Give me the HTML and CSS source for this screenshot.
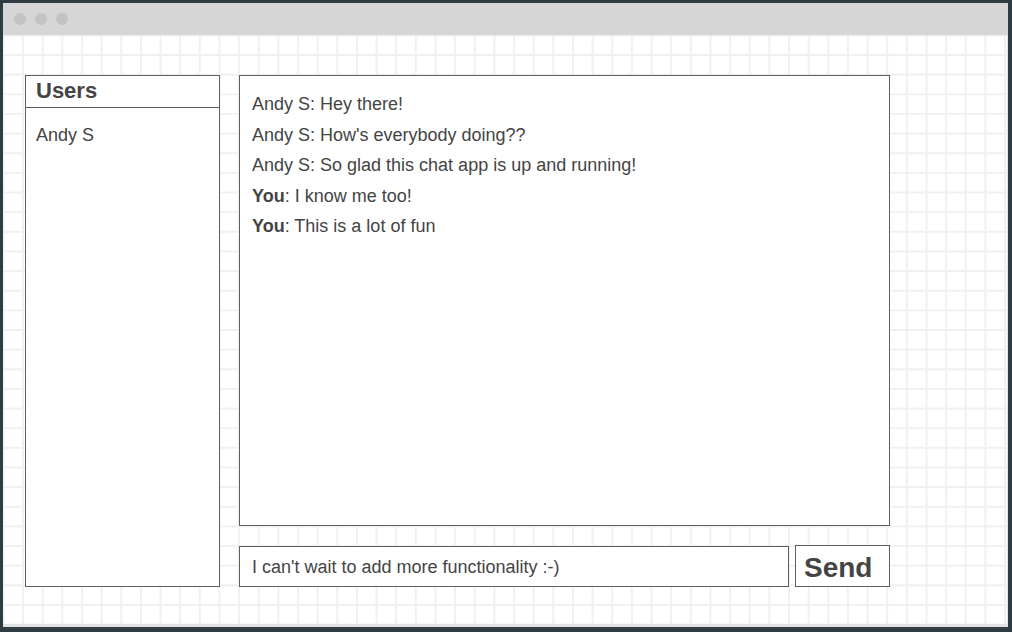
FILE: index.html
```html
<!DOCTYPE html>
<html>
<head>
<meta charset="utf-8">
<link rel="stylesheet" href="styles.css">
</head>
<body>
<div class="frame">
  <div class="titlebar">
    <span class="dot"></span><span class="dot"></span><span class="dot"></span>
  </div>
  <div class="canvas">
    <div class="app">
      <div class="users">
        <div class="users-head">Users</div>
        <div class="users-list">
          <div class="user">Andy S</div>
        </div>
      </div>
      <div class="chat">
        <div class="msg">Andy S: Hey there!</div>
        <div class="msg">Andy S: How's everybody doing??</div>
        <div class="msg">Andy S: So glad this chat app is up and running!</div>
        <div class="msg"><b>You</b>: I know me too!</div>
        <div class="msg"><b>You</b>: This is a lot of fun</div>
      </div>
      <div class="compose">
        <div class="input">I can't wait to add more functionality :-)</div>
        <div class="send">Send</div>
      </div>
    </div>
  </div>
</div>
</body>
</html>
```
FILE: styles.css
```css
html, body {
  margin: 0;
  padding: 0;
}
body {
  width: 1012px;
  height: 632px;
  overflow: hidden;
  background: #2f3c43;
  font-family: "Liberation Sans", Arial, sans-serif;
  color: #444;
}
.frame {
  box-sizing: border-box;
  width: 1012px;
  height: 632px;
  padding: 3px 4px 5px 3px;
  display: flex;
  flex-direction: column;
}
.titlebar {
  height: 32px;
  background: #d6d6d6;
  display: flex;
  align-items: center;
  gap: 9px;
  padding-left: 11px;
  flex: none;
}
.dot {
  width: 12px;
  height: 12px;
  border-radius: 50%;
  background: #c3c3c3;
}
.canvas {
  flex: 1;
  background-color: #fff;
  background-image:
    linear-gradient(to right, #f0f0f0 1.5px, transparent 1.5px),
    linear-gradient(to bottom, #f0f0f0 1.5px, transparent 1.5px);
  background-size: 19.65px 19.65px;
  background-position: -0.6px -0.6px;
  border-bottom: 3px solid #e2e2e2;
  border-right: 1px solid #e2e2e2;
}
.app {
  display: grid;
  grid-template-columns: 195px 651px;
  grid-template-rows: 451px 41px;
  column-gap: 19px;
  row-gap: 20px;
  padding: 40px 0 0 22px;
}
.users {
  grid-row: 1 / 3;
  border: 1px solid #5e5e5e;
  background: #fff;
  display: flex;
  flex-direction: column;
}
.users-head {
  height: 31px;
  border-bottom: 1px solid #5e5e5e;
  font-weight: bold;
  font-size: 22px;
  line-height: 30px;
  padding-left: 10px;
}
.users-list {
  padding: 12px 10px;
}
.user {
  font-size: 18px;
  line-height: 30px;
}
.chat {
  border: 1px solid #5e5e5e;
  background: #fff;
  padding: 13px 12px;
}
.msg {
  font-size: 18px;
  line-height: 30.5px;
}
.compose {
  display: flex;
  gap: 6px;
  align-items: stretch;
}
.input {
  flex: 1;
  border: 1px solid #5e5e5e;
  background: #fff;
  font-size: 18px;
  display: flex;
  align-items: center;
  padding: 2px 0 0 12px;
}
.send {
  margin-top: -1px;
  border: 1px solid #5e5e5e;
  background: #fff;
  font-weight: bold;
  font-size: 28px;
  display: flex;
  align-items: center;
  padding: 3px 0 0 8px;
  box-sizing: border-box;
  width: 95px;
}
```
